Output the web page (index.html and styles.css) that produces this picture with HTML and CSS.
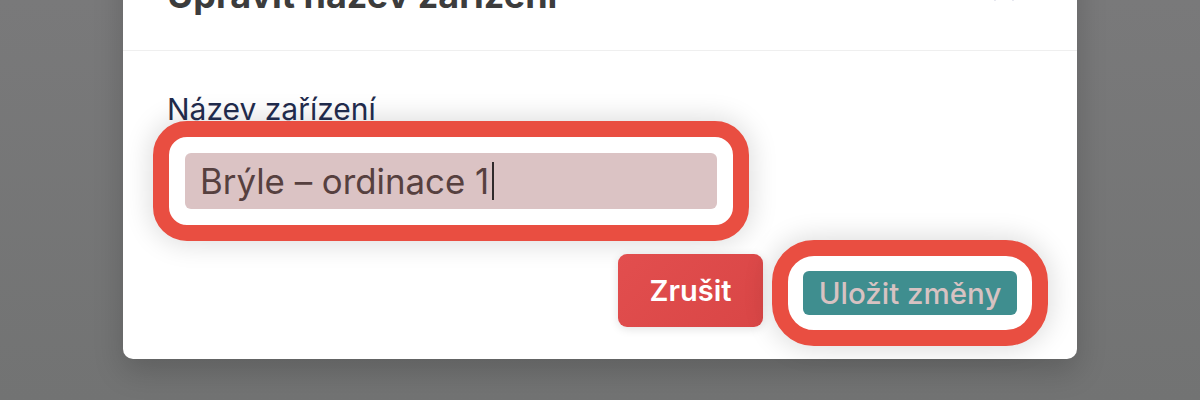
FILE: index.html
```html
<!DOCTYPE html>
<html lang="cs">
<head>
<meta charset="utf-8">
<title>Upravit název zařízení</title>
<link rel="stylesheet" href="styles.css">
</head>
<body>
<div class="modal">
  <div class="modal-header">
    <h2 class="modal-title">Upravit název zařízení</h2>
    <svg class="close-icon" width="24" height="24" viewBox="0 0 24 24" aria-label="Zavřít">
      <path d="M3 3 L21 21 M21 3 L3 21" fill="none" stroke="currentColor" stroke-width="2.6" stroke-linecap="round"/>
    </svg>
  </div>
  <div class="modal-body">
    <div class="field-label">Název zařízení</div>
    <div class="ring ring-input">
      <div class="text-input">Brýle – ordinace 1<span class="caret"></span></div>
    </div>
    <div class="modal-footer">
      <button class="btn btn-cancel">Zrušit</button>
      <div class="ring ring-save">
        <button class="btn btn-save">Uložit změny</button>
      </div>
    </div>
  </div>
</div>
</body>
</html>
```

FILE: styles.css
```css
html, body {
  margin: 0;
  padding: 0;
}

body {
  width: 1200px;
  height: 400px;
  overflow: hidden;
  background: linear-gradient(#79797a, #727373);
  font-family: Inter, "Noto Sans", "Liberation Sans", sans-serif;
}

.modal {
  margin: -47px 0 0 123px;
  width: 954px;
  background: #ffffff;
  border-radius: 0 0 10px 10px;
  box-shadow: 0 12px 30px rgba(0, 0, 0, 0.18);
}

.modal-header {
  display: flex;
  justify-content: space-between;
  align-items: flex-start;
  padding: 24px 61px 37px 44px;
  border-bottom: 1px solid #efefef;
}

.modal-title {
  margin: 0;
  font-size: 36px;
  line-height: 36px;
  font-weight: 700;
  color: #3c3c3c;
}

.close-icon {
  display: block;
  color: #8c8eb3;
  margin-top: 1px;
}

.modal-body {
  padding: 43px 29px 13px 44px;
}

.field-label {
  font-size: 30px;
  line-height: 30px;
  color: #1f2a4b;
  margin-bottom: -3px;
}

.ring {
  border: 16px solid #e94e41;
  background: #ffffff;
  box-shadow: 0 0 26px 4px rgba(0, 0, 0, 0.13);
}

.ring-input {
  box-sizing: border-box;
  margin-left: -14px;
  width: 596px;
  padding: 16px;
  border-radius: 34px;
}

.text-input {
  height: 56px;
  box-sizing: border-box;
  padding: 0 15px;
  display: flex;
  align-items: center;
  background: #dbc3c4;
  border-radius: 6px;
  font-size: 34.8px;
  color: #56403f;
}

.caret {
  display: inline-block;
  width: 2px;
  height: 38px;
  margin-left: 3px;
  background: #2f2a2b;
}

.modal-footer {
  display: flex;
  justify-content: flex-end;
  align-items: center;
  gap: 9px;
  margin-top: -1px;
}

.btn {
  font-family: inherit;
  border: none;
  margin: 0;
  cursor: pointer;
}

.btn-cancel {
  width: 145px;
  height: 73px;
  margin-bottom: 5px;
  border-radius: 9px;
  background: linear-gradient(135deg, #e24e4e, #d94646);
  color: #ffffff;
  font-size: 29px;
  font-weight: 600;
  box-shadow: 0 2px 10px rgba(0, 0, 0, 0.12);
}

.ring-save {
  padding: 15px;
  border-radius: 42px;
}

.btn-save {
  display: block;
  width: 214px;
  height: 44px;
  padding: 0;
  border-radius: 6px;
  background: #3f8e8f;
  color: #d7c2c2;
  font-size: 29.5px;
  font-weight: 500;
}
```
